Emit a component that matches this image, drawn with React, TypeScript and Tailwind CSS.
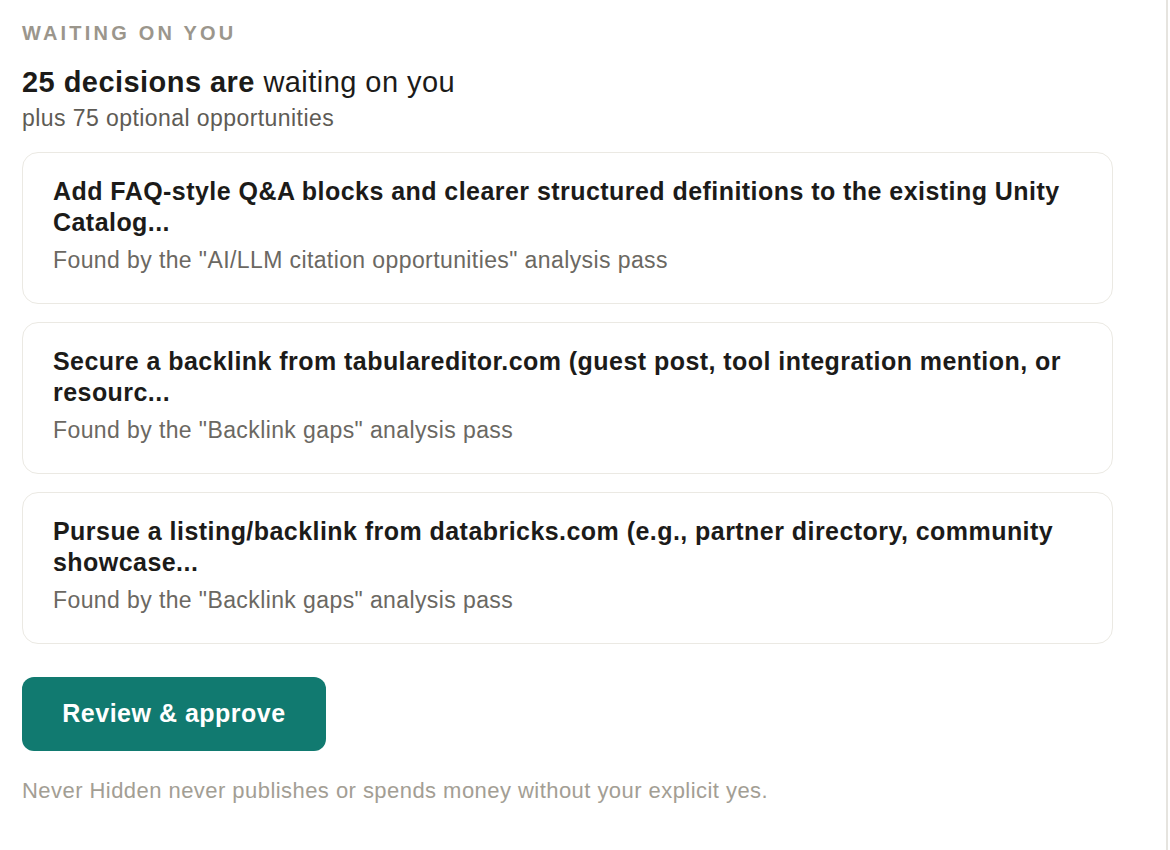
const ITEMS = [
  {
    title:
      "Add FAQ-style Q&A blocks and clearer structured definitions to the existing Unity Catalog...",
    source: "AI/LLM citation opportunities",
  },
  {
    title:
      "Secure a backlink from tabulareditor.com (guest post, tool integration mention, or resourc...",
    source: "Backlink gaps",
  },
  {
    title:
      "Pursue a listing/backlink from databricks.com (e.g., partner directory, community showcase...",
    source: "Backlink gaps",
  },
]

export default function App() {
  return (
    <div className="flex min-h-[850px] w-[1170px] bg-white [font-family:'Liberation_Sans',Arial,sans-serif]">
      {/* Main column */}
      <main className="w-[1166px] pl-[22px] pt-[21px]">
        <h3 className="text-[20px] leading-[24px] font-bold tracking-[3.2px] text-[#9b968c]">
          WAITING ON YOU
        </h3>

        <h2 className="mt-[19px] text-[29px] leading-[36px] tracking-[0.45px] text-[#1c1b19]">
          <span className="font-bold">25 decisions are</span> waiting on you
        </h2>
        <p className="mt-[3px] text-[23px] leading-[30px] tracking-[0.43px] text-[#5e5b55]">
          plus 75 optional opportunities
        </p>

        {/* Decision cards */}
        <div className="mt-[19px] flex w-[1091px] flex-col gap-[18px]">
          {ITEMS.map((item, i) => (
            <div
              key={i}
              className="h-[152px] rounded-[16px] border border-[#ebe9e3] bg-white px-[30px] pt-[23px]"
            >
              <p className="text-[25px] leading-[31px] font-bold tracking-[0.45px] text-[#1c1b19]">
                {item.title}
              </p>
              <p className="mt-[6px] text-[23px] leading-[32px] tracking-[0.4px] text-[#6b6862]">
                Found by the "{item.source}" analysis pass
              </p>
            </div>
          ))}
        </div>

        <button className="mt-[33px] flex h-[74px] w-[304px] items-center justify-center rounded-[12px] bg-[#117a70] text-[25px] font-bold tracking-[0.5px] text-white">
          Review &amp; approve
        </button>

        <p className="mt-[26px] text-[22px] leading-[28px] tracking-[0.45px] text-[#a39e94]">
          Never Hidden never publishes or spends money without your explicit yes.
        </p>
      </main>

      {/* Side panel edge */}
      <div className="flex-1 border-l-2 border-[#e6e4df]" />
    </div>
  )
}
